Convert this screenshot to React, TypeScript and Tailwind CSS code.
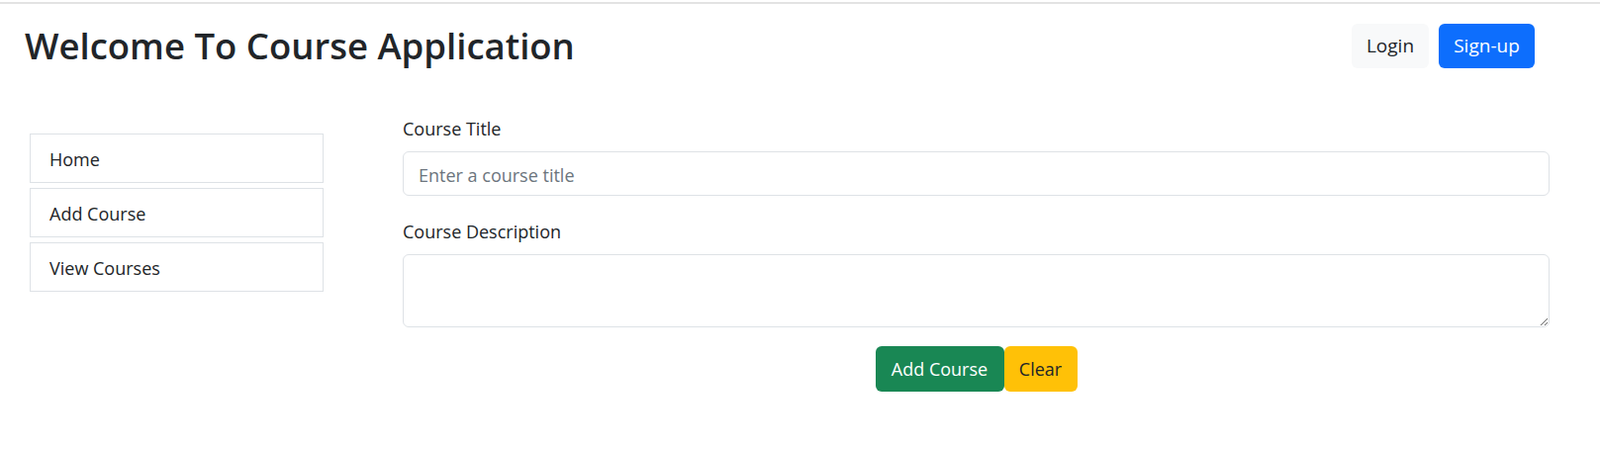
import { useState } from "react";

const menuItems = ["Home", "Add Course", "View Courses"];

const App = () => {
	const [title, setTitle] = useState("");
	const [description, setDescription] = useState("");

	return (
		<div className="min-h-screen bg-white font-['Segoe_UI','Open_Sans',sans-serif] text-[#212529]">
			<div className="mt-[2px] h-[2px] bg-[#e3e3e3]" />

			{/* header */}
			<header className="flex items-center justify-between pl-[25px] pr-[66px] pt-[18px]">
				<h1 className="text-[36.5px] font-semibold leading-[48px]">
					Welcome To Course Application
				</h1>
				<div className="flex gap-[10px]">
					<button className="h-[45px] w-[78px] rounded-md bg-[#f8f9fa] text-[19px] text-[#212529]">
						Login
					</button>
					<button className="h-[45px] w-[97px] rounded-md bg-[#0d6efd] text-[19px] text-white">
						Sign-up
					</button>
				</div>
			</header>

			<div className="flex pt-[42px]">
				{/* side menu */}
				<nav className="ml-[30px] mt-[23px] flex w-[297px] flex-col gap-[5px]">
					{menuItems.map((item) => (
						<a
							key={item}
							href="#"
							className="flex h-[50px] items-center border border-[#dee2e6] px-[19px] pt-[2px] text-[18px]">
							{item}
						</a>
					))}
				</nav>

				{/* form */}
				<form
					className="ml-[80px] mt-[5px] w-[1159px]"
					onSubmit={(e) => e.preventDefault()}>
					<label className="block pb-[9px] text-[18px] leading-[27px]">
						Course Title
					</label>
					<input
						type="text"
						placeholder="Enter a course title"
						value={title}
						onChange={(e) => setTitle(e.target.value)}
						className="block h-[45px] w-full rounded-md border border-[#dee2e6] px-[15px] pt-[2px] text-[18px] placeholder:text-[#6c757d] outline-none"
					/>

					<label className="mt-[23px] block pb-[9px] text-[18px] leading-[27px]">
						Course Description
					</label>
					<textarea
						value={description}
						onChange={(e) => setDescription(e.target.value)}
						className="block h-[74px] w-full rounded-md border border-[#dee2e6] px-[15px] py-[8px] text-[18px] outline-none"
					/>

					<div className="mt-[19px] flex justify-center">
						<button
							type="submit"
							className="h-[46px] w-[130px] rounded-md bg-[#198754] text-[18px] text-white">
							Add Course
						</button>
						<button
							type="button"
							onClick={() => {
								setTitle("");
								setDescription("");
							}}
							className="h-[46px] w-[74px] rounded-md bg-[#ffc107] text-[18px] text-[#212529]">
							Clear
						</button>
					</div>
				</form>
			</div>
		</div>
	);
};

export default App;
